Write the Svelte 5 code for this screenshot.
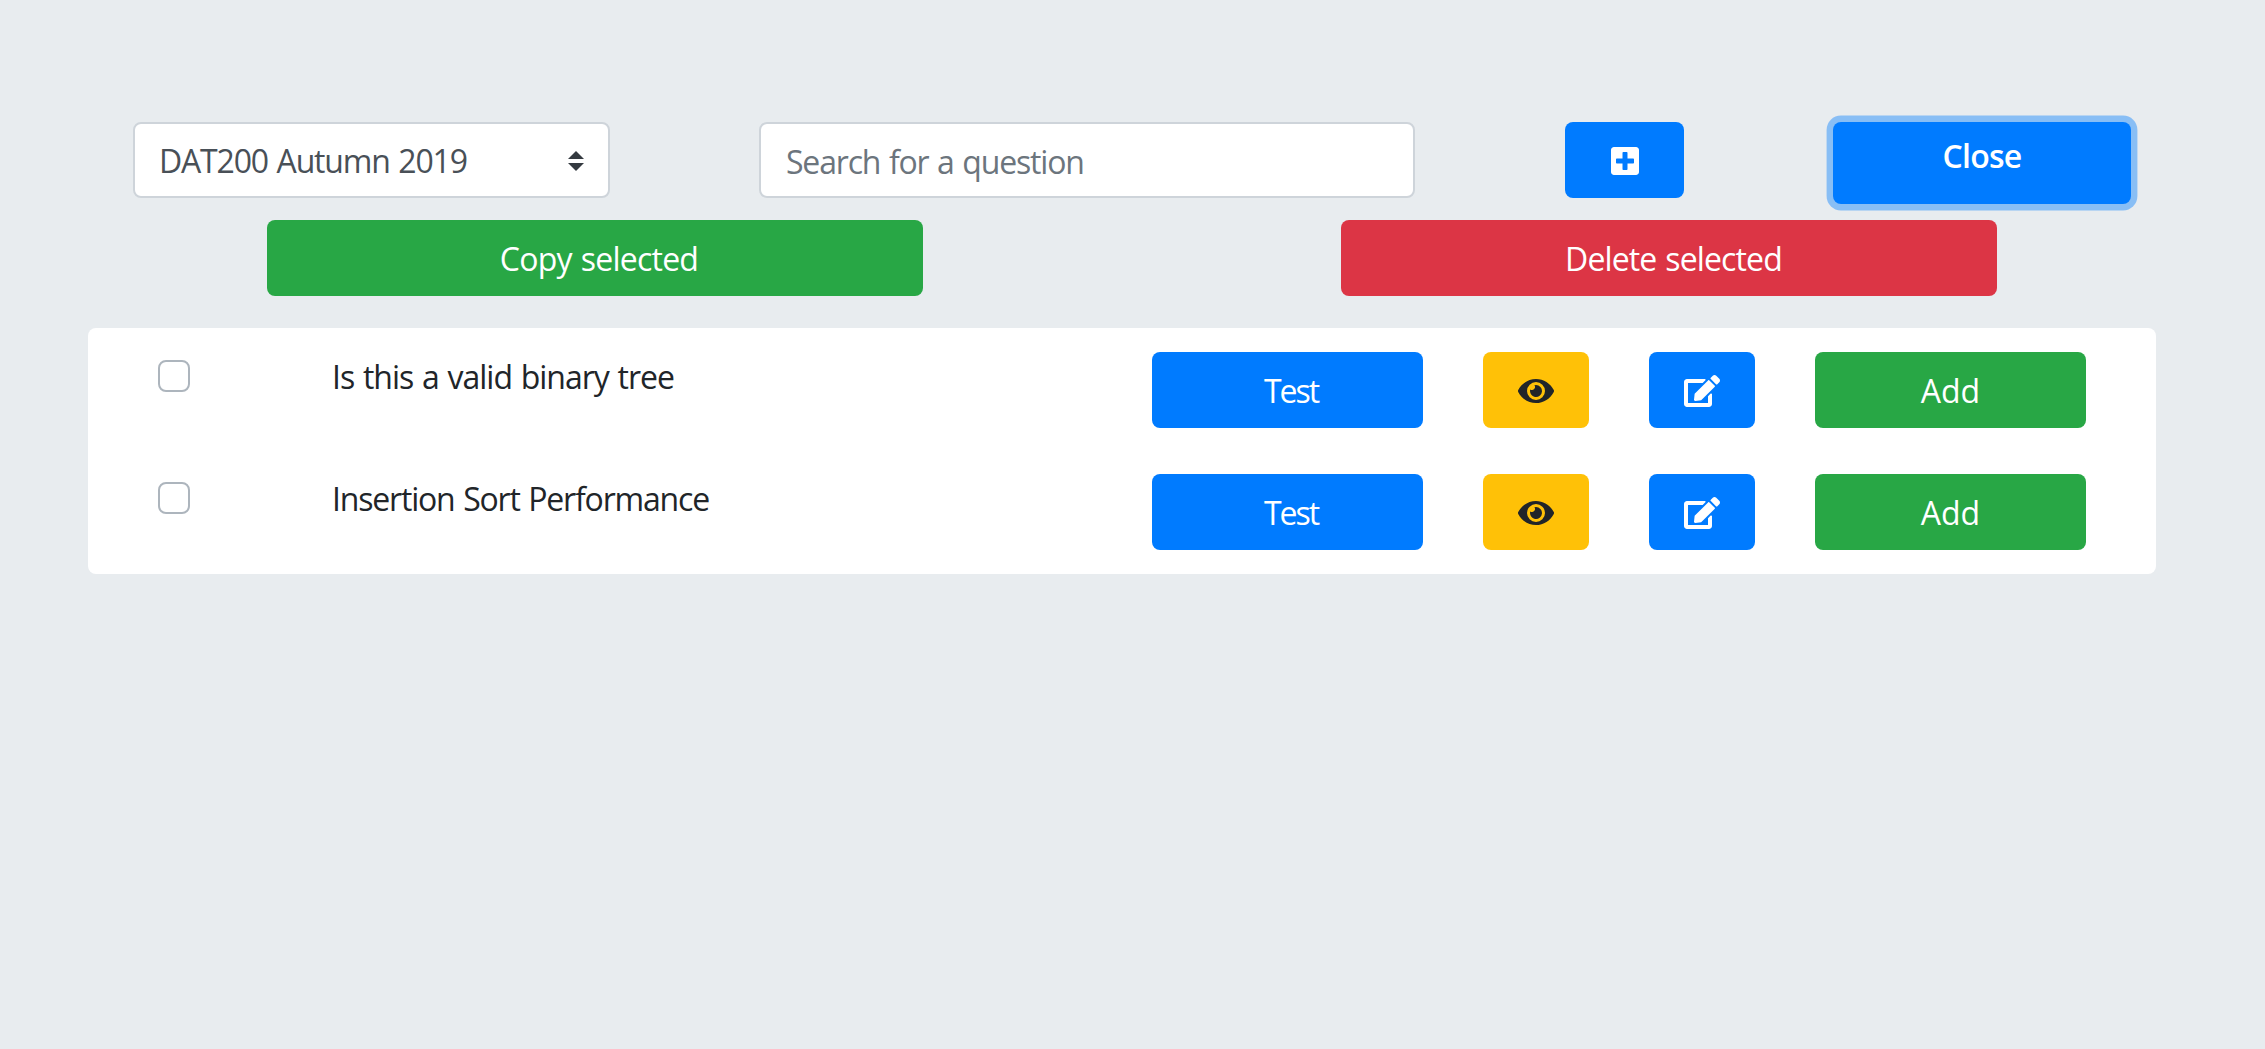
<script>
  let questions = $state([
    { title: 'Is this a valid binary tree', fit: 'fit-a', selected: false },
    { title: 'Insertion Sort Performance', fit: 'fit-b', selected: false }
  ]);
  let search = $state('');
</script>

<main>
  <header class="toolbar">
    <button class="select">
      <span>DAT200 Autumn 2019</span>
      <svg class="arrows" viewBox="0 0 4 5" preserveAspectRatio="none"><path fill="#343a40" d="M2 0L0 2h4zm0 5L0 3h4z" /></svg>
    </button>
    <input class="search" type="text" placeholder="Search for a question" bind:value={search} />
    <button class="btn primary icon new" aria-label="New question">
      <svg width="28" height="32" viewBox="0 0 448 512"><path fill="currentColor" d="M400 32H48C21.5 32 0 53.500 0 80v352c0 26.500 21.500 48 48 48h352c26.500 0 48-21.500 48-48V80c0-26.500-21.500-48-48-48zm-32 252c0 6.600-5.400 12-12 12h-92v92c0 6.600-5.400 12-12 12h-56c-6.600 0-12-5.400-12-12v-92H92c-6.600 0-12-5.400-12-12v-56c0-6.600 5.400-12 12-12h92v-92c0-6.600 5.400-12 12-12h56c6.600 0 12 5.400 12 12v92h92c6.600 0 12 5.400 12 12v56z" /></svg>
    </button>
    <button class="btn primary close">Close</button>
  </header>

  <div class="bulk">
    <button class="btn success copy">Copy selected</button>
    <button class="btn danger delete">Delete selected</button>
  </div>

  <section class="card">
    {#each questions as q}
      <div class="row">
        <input class="check" type="checkbox" aria-label={q.title} bind:checked={q.selected} />
        <div class="title {q.fit}">{q.title}</div>
        <button class="btn primary test">Test</button>
        <button class="btn warning icon" aria-label="Preview">
          <svg width="36" height="32" viewBox="0 0 576 512"><path fill="currentColor" d="M572.520 241.400C518.290 135.590 410.930 64 288 64S57.680 135.640 3.480 241.410a32.350 32.350 0 0 0 0 29.190C57.710 376.410 165.070 448 288 448s230.320-71.640 284.520-177.410a32.350 32.350 0 0 0 0-29.190zM288 400a144 144 0 1 1 144-144 143.930 143.930 0 0 1-144 144zm0-240a95.310 95.310 0 0 0-25.310 3.790 47.850 47.850 0 0 1-66.900 66.900A95.780 95.780 0 1 0 288 160z" /></svg>
        </button>
        <button class="btn primary icon" aria-label="Edit">
          <svg width="36" height="32" viewBox="0 0 576 512"><path fill="currentColor" d="M402.600 83.200l90.200 90.200c3.800 3.800 3.800 10 0 13.800L274.400 405.600l-92.800 10.300c-12.400 1.400-22.900-9.100-21.500-21.500l10.300-92.800L388.800 83.200c3.800-3.800 10-3.800 13.800 0zm162-22.900l-48.800-48.800c-15.200-15.200-39.900-15.200-55.200 0l-35.400 35.400c-3.800 3.800-3.800 10 0 13.800l90.200 90.200c3.800 3.800 10 3.800 13.800 0l35.400-35.400c15.200-15.300 15.200-40 0-55.200zM384 346.200V448H64V128h229.800c3.200 0 6.200-1.300 8.500-3.500l40-40c7.600-7.600 2.200-20.500-8.500-20.500H48C21.500 64 0 85.500 0 112v352c0 26.500 21.500 48 48 48h352c26.500 0 48-21.500 48-48V306.200c0-10.700-12.900-16-20.500-8.500l-40 40c-2.200 2.300-3.500 5.300-3.500 8.500z" /></svg>
        </button>
        <button class="btn success add">Add</button>
      </div>
    {/each}
  </section>
</main>

<style>
  :global(body) {
    margin: 0;
    background: #e8ecef;
  }
  main, button, input {
    box-sizing: border-box;
    font-family: 'Open Sans', 'Noto Sans', sans-serif;
    font-size: 32px;
    line-height: 48px;
    word-spacing: 1.5px;
  }
  main {
    min-height: 1049px;
    padding: 122px 109px 0 88px;
    color: #212529;
  }
  .toolbar {
    display: grid;
    grid-template-columns: 477px 657px 119px 298px;
    column-gap: 149px;
    align-items: start;
    height: 98px;
    padding-left: 45px;
  }
  .select {
    display: flex;
    align-items: center;
    justify-content: space-between;
    height: 76px;
    padding: 2px 24px 0;
    border: 2px solid #ced4da;
    border-radius: 8px;
    background: #fff;
    color: #495057;
    text-align: left;
    letter-spacing: -1.17px;
  }
  .arrows {
    width: 16px;
    height: 20px;
    margin-bottom: 1px;
  }
  .search {
    width: 656px;
    height: 76px;
    padding: 3px 24px 0 25px;
    border: 2px solid #ced4da;
    border-radius: 8px;
    background: #fff;
    color: #495057;
    letter-spacing: -1.18px;
  }
  .search::placeholder {
    color: #6c757d;
    opacity: 1;
  }
  .btn {
    height: 76px;
    padding: 15px 0 13px;
    border: 0;
    border-radius: 8px;
    color: #fff;
    text-align: center;
  }
  .primary { background: #007bff; }
  .success { background: #28a745; }
  .danger { background: #dc3545; }
  .warning { background: #ffc107; color: #212529; }
  .icon {
    display: flex;
    align-items: center;
    justify-content: center;
  }
  .close {
    height: 82px;
    padding: 10px 0 24px;
    font-weight: 600;
    letter-spacing: -0.8px;
    box-shadow: 0 0 0 6.4px rgba(0, 123, 255, 0.41);
  }
  .bulk {
    display: grid;
    grid-template-columns: 656px 656px;
    column-gap: 418px;
    padding-left: 179px;
  }
  .copy { padding-left: 8px; letter-spacing: -0.77px; }
  .delete { padding-left: 9px; letter-spacing: -0.88px; }
  .card {
    height: 246px;
    margin-top: 32px;
    box-sizing: border-box;
    padding: 24px 70px;
    border-radius: 8px;
    background: #fff;
  }
  .row {
    display: grid;
    grid-template-columns: 32px 842px 271px 106px 106px 271px;
    column-gap: 60px;
    align-items: start;
    height: 122px;
  }
  .row .title {
    margin-left: 82px;
    padding-top: 1px;
    white-space: nowrap;
  }
  .fit-a { letter-spacing: -1.02px; }
  .fit-b { letter-spacing: -1.19px; }
  .row .test { padding-left: 7px; letter-spacing: -2px; }
  .check {
    appearance: none;
    width: 32px;
    height: 32px;
    margin: 8px 0 0;
    border: 2px solid #adb5bd;
    border-radius: 8px;
    background: #fff;
  }
</style>
